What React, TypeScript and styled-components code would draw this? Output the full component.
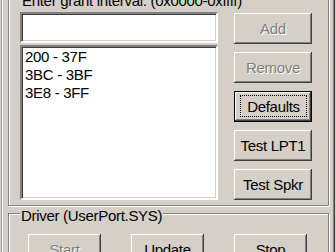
import styled, { createGlobalStyle } from 'styled-components';

const GlobalStyle = createGlobalStyle`
  html, body {
    margin: 0;
    background: #d4d0c8;
    overflow: hidden;
  }
  body {
    font-family: 'Liberation Sans', Arial, sans-serif;
    font-size: 15px;
    letter-spacing: -0.3px;
    color: #000;
  }
`;

const Page = styled.div`
  box-sizing: border-box;
  width: 332px;
  height: 260px;
  margin-left: 2px;
  padding: 0 4px 0 5px;
  border-left: 1px solid #fff;
  border-right: 1px solid #808080;
  box-shadow: -1px 0 0 #a0a0a0, 1px 0 0 #404040;
`;

const Group = styled.fieldset<{ $top: number; $pad: string }>`
  box-sizing: border-box;
  width: 321px;
  min-width: 0;
  margin: ${(p) => p.$top}px 0 0;
  padding: ${(p) => p.$pad};
  border: 1px solid #808080;
  box-shadow: inset 1px 1px 0 #fff, 1px 1px 0 #fff;
`;

const Caption = styled.legend<{ $side: number }>`
  padding: 6px ${(p) => p.$side}px 0;
  line-height: 0;
  background: #d4d0c8;
  white-space: nowrap;
`;

const Body = styled.div`
  display: flex;
  gap: 16px;
`;

const LeftCol = styled.div`
  display: flex;
  flex-direction: column;
  gap: 2px;
  width: 198px;
`;

const RightCol = styled.div`
  display: flex;
  flex-direction: column;
  gap: 8px;
  margin-top: 1px;
`;

const sunken = `
  box-sizing: border-box;
  border: 2px solid;
  border-color: #808080 #fff #fff #808080;
  box-shadow: inset 1px 1px 0 #404040, inset -1px -1px 0 #d4d0c8;
  background: #fff;
`;

const TextField = styled.input`
  ${sunken}
  width: 198px;
  height: 31px;
  padding: 0 4px;
  font: inherit;
  outline: none;
`;

const ListBox = styled.ul`
  ${sunken}
  height: 155px;
  margin: 0;
  padding: 1px 3px;
  list-style: none;
`;

const Item = styled.li`
  line-height: 18px;
  white-space: nowrap;
`;

const Button = styled.button<{ $w: number; $default?: boolean }>`
  box-sizing: border-box;
  display: flex;
  align-items: center;
  justify-content: center;
  width: ${(p) => p.$w}px;
  height: 31px;
  padding: 0;
  font: inherit;
  letter-spacing: inherit;
  color: #000;
  background: #d4d0c8;
  border: ${(p) => (p.$default ? '1px solid #000' : 'none')};
  border-radius: 0;
  box-shadow: inset -1px -1px 0 #404040, inset 1px 1px 0 #fff,
    inset -2px -2px 0 #808080, inset 2px 2px 0 #d4d0c8;

  &:disabled {
    color: #808080;
    text-shadow: 1px 1px 0 #fff;
  }
`;

const FocusRect = styled.span`
  display: flex;
  align-items: center;
  justify-content: center;
  align-self: stretch;
  flex: 1;
  margin: 3px 4px 4px 5px;
  border: 1px dotted #000;
`;

const DriverRow = styled.div`
  display: flex;
  gap: 30px;
  padding-left: 8px;
`;

const ranges = ['200 - 37F', '3BC - 3BF', '3E8 - 3FF'];

export default function App() {
  return (
    <>
      <GlobalStyle />
      <Page>
        <Group $top={-5} $pad="11px 16px 5px 11px">
          <Caption $side={2}>Enter grant interval: (0x0000-0xffff)</Caption>
          <Body>
            <LeftCol>
              <TextField />
              <ListBox>
                {ranges.map((r) => (
                  <Item key={r}>{r}</Item>
                ))}
              </ListBox>
            </LeftCol>
            <RightCol>
              <Button $w={78} disabled>Add</Button>
              <Button $w={78} disabled>Remove</Button>
              <Button $w={78} $default>
                <FocusRect>Defaults</FocusRect>
              </Button>
              <Button $w={78}>Test LPT1</Button>
              <Button $w={78}>Test Spkr</Button>
            </RightCol>
          </Body>
        </Group>
        <Group $top={4} $pad="18px 0 0 11px">
          <Caption $side={1}>Driver (UserPort.SYS)</Caption>
          <DriverRow>
            <Button $w={73} disabled>Start</Button>
            <Button $w={73}>Update</Button>
            <Button $w={73}>Stop</Button>
          </DriverRow>
        </Group>
      </Page>
    </>
  );
}
